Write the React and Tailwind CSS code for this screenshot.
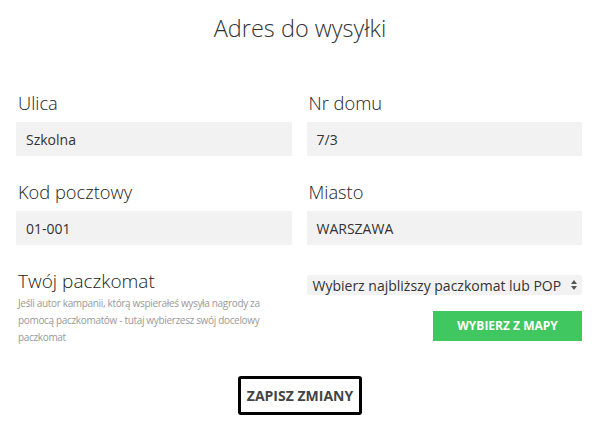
import React from 'react';

const fields = [
  { label: 'Ulica', value: 'Szkolna' },
  { label: 'Nr domu', value: '7/3' },
  { label: 'Kod pocztowy', value: '01-001' },
  { label: 'Miasto', value: 'WARSZAWA' },
];

const App = () => {
  return (
    <div className="w-[600px] h-[440px] bg-white font-['Open_Sans',sans-serif] text-[#333]">
      <h1 className="pt-3 text-center text-[23.5px] leading-8 font-light text-[#333]">Adres do wysyłki</h1>

      <div className="mt-[47px] pl-4 pr-[18px] grid grid-cols-2 gap-x-[15px] gap-y-6">
        {fields.map((f) => (
          <div key={f.label}>
            <label className="block pl-[2px] text-[18.3px] leading-6 font-light text-[#222] mb-[7px]">{f.label}</label>
            <div className="h-[34px] bg-[#f2f2f2] px-[10px] flex items-center text-[14px] text-[#333]">{f.value}</div>
          </div>
        ))}

        {/* paczkomat */}
        <div className="pl-[2px]">
          <div className="text-[19px] leading-6 font-light text-[#222]">Twój paczkomat</div>
          <p className="mt-[2px] w-[275px] text-[10px] tracking-[-0.33px] leading-[17px] text-[#999]">
            Jeśli autor kampanii, którą wspierałeś wysyła nagrody za<br />
            pomocą paczkomatów - tutaj wybierzesz swój docelowy<br />
            paczkomat
          </p>
        </div>
        <div className="flex flex-col items-end pt-[6px]">
          <div className="w-full h-[20px] bg-[#f2f2f2] rounded-[3px] flex items-center justify-between pl-[6px] pr-[4px] text-[14px] text-[#333] whitespace-nowrap">
            <span>Wybierz najbliższy paczkomat lub POP</span>
            <svg width="8" height="12" viewBox="0 0 8 12">
              <path d="M4 1 L7 5 H1 Z" fill="#555" />
              <path d="M4 11 L7 7 H1 Z" fill="#555" />
            </svg>
          </div>
          <button className="mt-4 w-[149px] h-[30px] bg-[#41c760] text-white text-[12px] font-bold uppercase">Wybierz z mapy</button>
        </div>
      </div>

      <div className="flex justify-center mt-[30px]">
        <button className="w-[124px] h-[39px] border-[3px] border-black rounded-[3px] text-[14px] font-bold text-[#444]">ZAPISZ ZMIANY</button>
      </div>
    </div>
  );
};

export default App;
